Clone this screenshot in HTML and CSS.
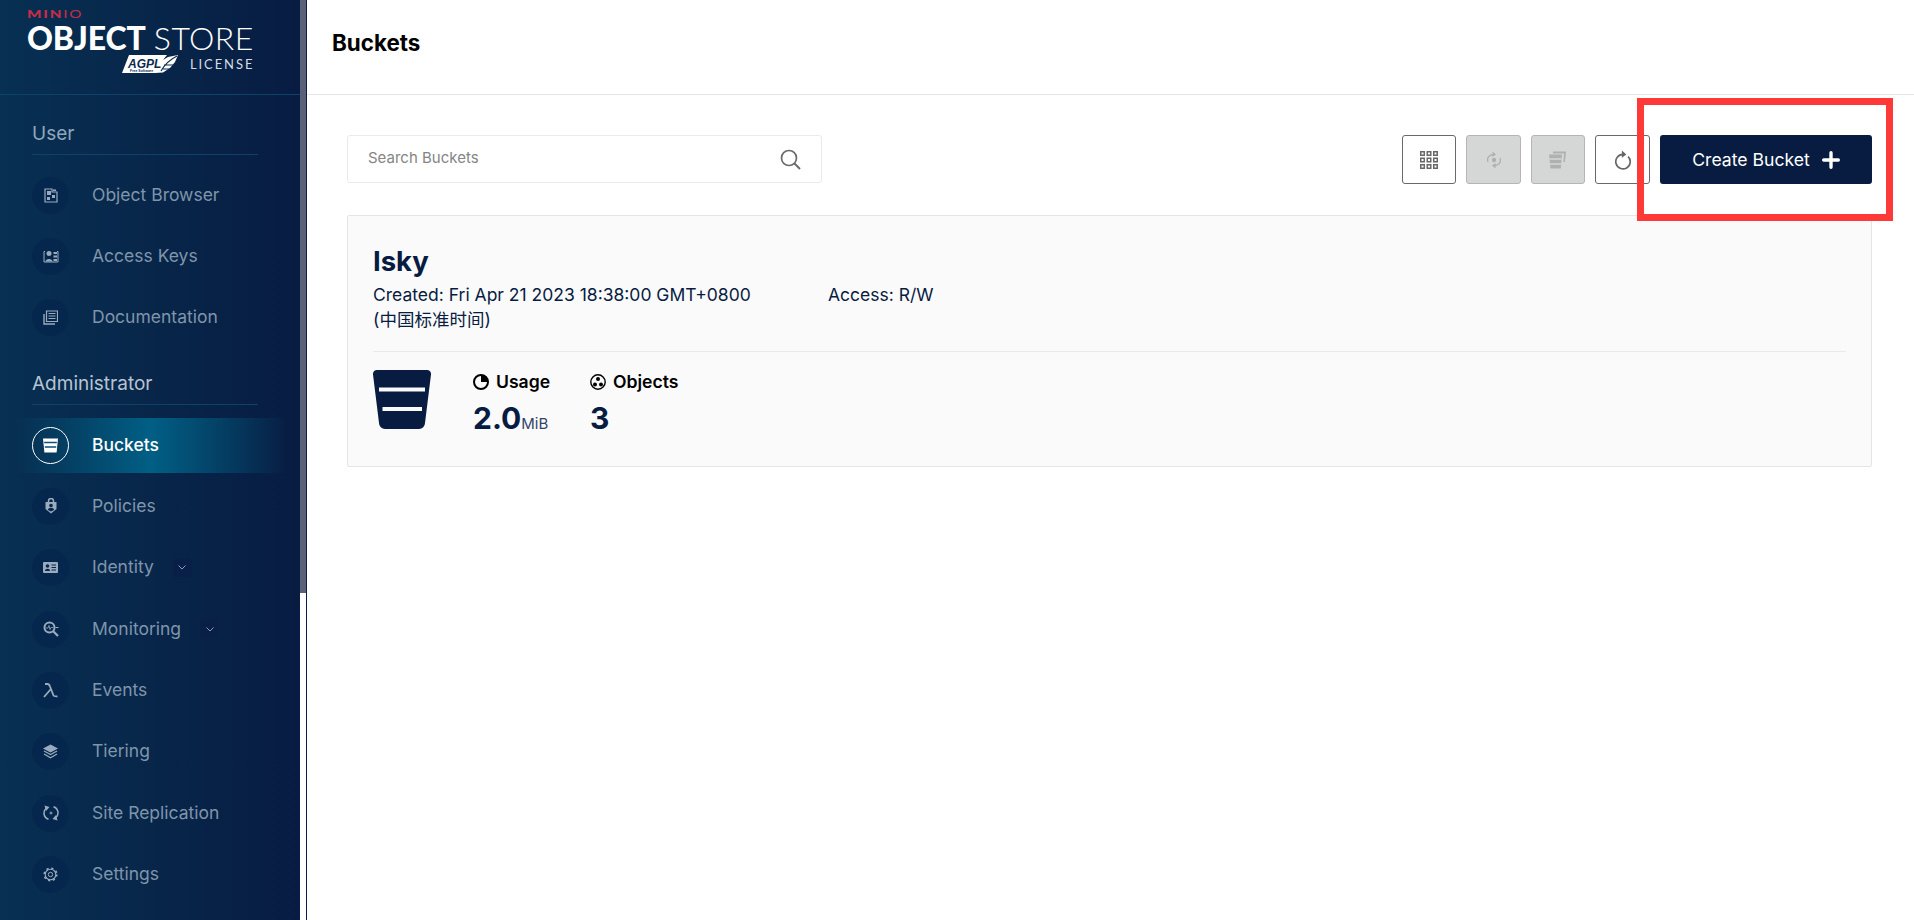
FILE: index.html
```html
<!DOCTYPE html>
<html lang="en">
<head>
<meta charset="utf-8">
<title>Buckets</title>
<link rel="stylesheet" href="styles.css">
</head>
<body>
<div class="app">
  <aside class="sidebar">
    <div class="logo">
      <div class="logo-minio"><span class="minio-bold">MIN</span><span class="minio-light">IO</span></div>
      <div class="logo-product"><span class="logo-strong">OBJECT</span> <span class="logo-thin">STORE</span></div>
      <div class="logo-license">
        <svg class="agpl" width="58" height="20" viewBox="0 0 58 20"><path d="M8 1H46L42 6 47 3 57 1 54 8 49 14 42 18.500 34 19H1Z" fill="#fff"/><path d="M40 17C44 10 50 5 56 2M43 11H52M42 15H49" stroke="#0a2a50" fill="none" stroke-width="1.200"/><text x="7" y="13.500" class="agpl-text">AGPL</text><text x="9" y="18" class="agpl-small">Free Software</text></svg>
        <span class="license-text">LICENSE</span>
      </div>
    </div>

    <div class="group-title">User</div>
    <nav class="nav">
      <a class="nav-item"><span class="nav-icon"><svg width="14" height="15" viewBox="0 0 14 15"><path d="M1 1H8V4H13V14H1Z" fill="none" stroke="currentColor" stroke-width="1.200"/><path d="M3 3H7V7H3ZM8 7H11V10H8ZM3 9H6V12H3ZM9 1.500H12V3H9Z" fill="currentColor"/></svg></span><span>Object Browser</span></a>
      <a class="nav-item"><span class="nav-icon"><svg width="16" height="13" viewBox="0 0 16 13"><path d="M2 1.500H1V12H15V1.500H14" fill="none" stroke="currentColor" stroke-width="1"/><circle cx="6" cy="3.500" r="2.500" fill="currentColor"/><path d="M2.500 11.500C2.500 8 9.500 8 9.500 11.500Z" fill="currentColor"/><path d="M10.500 2H14V4H10.500ZM10.500 5.500H14V7.500H10.500ZM10.500 9H14V11H10.500Z" fill="currentColor"/></svg></span><span>Access Keys</span></a>
      <a class="nav-item"><span class="nav-icon"><svg width="15" height="15" viewBox="0 0 15 15"><path d="M3.500 1H14.500V11.500H3.500Z" fill="none" stroke="currentColor" stroke-width="1.200"/><path d="M5.500 3.500H12.500M5.500 6H12.500M5.500 8.500H12.500" stroke="currentColor" stroke-width="1.200"/><path d="M1 4V14H12" fill="none" stroke="currentColor" stroke-width="1.400"/></svg></span><span>Documentation</span></a>
    </nav>

    <div class="group-title group-title-admin">Administrator</div>
    <nav class="nav">
      <a class="nav-item nav-item-active"><span class="nav-icon"><svg width="15" height="15" viewBox="0 0 15 15"><path d="M0 0.500H15L13.600 14.500H1.400Z" fill="currentColor"/><path d="M1.200 4.500H13.800M1.800 9H13.200" stroke="#08507a" stroke-width="1.500"/></svg></span><span>Buckets</span></a>
      <a class="nav-item"><span class="nav-icon"><svg width="12" height="16" viewBox="0 0 12 16"><path d="M3.500 4V3A2.500 2.500 0 0 1 8.500 3V4" fill="none" stroke="currentColor" stroke-width="1.500"/><path d="M0.500 4H11.500V11L6 15.500 0.500 11Z" fill="currentColor"/><circle cx="6" cy="7.500" r="1.800" fill="#06274d"/><path d="M3 12C3 9 9 9 9 12L6 13.500Z" fill="#06274d"/></svg></span><span>Policies</span></a>
      <a class="nav-item"><span class="nav-icon"><svg width="15" height="11" viewBox="0 0 15 11"><path d="M1 0H14A1 1 0 0 1 15 1V10A1 1 0 0 1 14 11H1A1 1 0 0 1 0 10V1A1 1 0 0 1 1 0Z" fill="currentColor"/><circle cx="4.500" cy="4" r="1.800" fill="#06274d"/><path d="M2 9C2 6 7 6 7 9Z" fill="#06274d"/><path d="M8.500 3H13M8.500 5.500H13M8.500 8H13" stroke="#06274d"/></svg></span><span>Identity</span><span class="chevron"><svg width="8" height="5" viewBox="0 0 8 5"><path d="M0.500 0.500L4 4 7.500 0.500" fill="none" stroke="currentColor"/></svg></span></a>
      <a class="nav-item"><span class="nav-icon"><svg width="16" height="16" viewBox="0 0 16 16"><circle cx="6.500" cy="6.500" r="5" fill="none" stroke="currentColor" stroke-width="2"/><path d="M10.500 10.500L15 15" stroke="currentColor" stroke-width="2.200"/><path d="M3 7H5L6 4.500 7 8.500 8 6.500H10" fill="none" stroke="currentColor" stroke-width=".8"/><path d="M12.500 6.500H15.500" stroke="currentColor"/></svg></span><span>Monitoring</span><span class="chevron"><svg width="8" height="5" viewBox="0 0 8 5"><path d="M0.500 0.500L4 4 7.500 0.500" fill="none" stroke="currentColor"/></svg></span></a>
      <a class="nav-item"><span class="nav-icon"><svg width="15" height="15" viewBox="0 0 15 15"><path d="M2 1H4.500C6 1 6.500 2 7 3.500L10.500 12.500C10.900 13.500 11.500 13.500 14.500 13.300M7.500 6.500L1 14" fill="none" stroke="currentColor" stroke-width="1.800"/></svg></span><span>Events</span></a>
      <a class="nav-item"><span class="nav-icon"><svg width="15" height="15" viewBox="0 0 15 15"><path d="M7.500 0.500L15 4.500 7.500 8.500 0 4.500Z" fill="currentColor"/><path d="M1 7L7.500 10.500 14 7M1 10L7.500 13.800 14 10" fill="none" stroke="currentColor" stroke-width="1.200"/></svg></span><span>Tiering</span></a>
      <a class="nav-item"><span class="nav-icon"><svg width="16" height="16" viewBox="0 0 16 16"><path d="M3.500 3A6.500 6.500 0 0 0 5.500 14.300M12.500 13A6.500 6.500 0 0 0 10.500 1.700" fill="none" stroke="currentColor" stroke-width="1.500"/><path d="M1.500 0.500L6.500 2 3 6ZM14.500 15.500L9.500 14 13 10Z" fill="currentColor"/><path d="M8 6.500V9.500M6.500 8H9.500" stroke="currentColor"/></svg></span><span>Site Replication</span></a>
      <a class="nav-item"><span class="nav-icon"><svg width="15" height="15" viewBox="0 0 15 15"><circle cx="7.500" cy="7.500" r="2.200" fill="none" stroke="currentColor"/><circle cx="7.500" cy="7.500" r="5.300" fill="none" stroke="currentColor" stroke-width="1.100"/><circle cx="7.500" cy="7.500" r="6.300" fill="none" stroke="currentColor" stroke-width="1.500" stroke-dasharray="2.200 2.750"/></svg></span><span>Settings</span></a>
    </nav>
  </aside>
  <div class="scroll-track"><div class="scroll-thumb"></div></div>

  <main class="main">
    <header class="page-header"><h1 class="page-title">Buckets</h1></header>
    <div class="content">
      <div class="toolbar">
        <div class="search">
          <span class="search-text">Search Buckets</span>
          <svg width="21" height="21" viewBox="0 0 21 21"><circle cx="9" cy="9" r="7.500" fill="none" stroke="#6b6b6b" stroke-width="1.700"/><path d="M14.500 14.500L20 20" stroke="#6b6b6b" stroke-width="2"/></svg>
        </div>
        <div class="actions">
          <button class="tool"><svg width="18" height="18" viewBox="0 0 18 18"><path d="M0 0h5v5H0zM6.500 0h5v5h-5zM13 0h5v5h-5zM0 6.500h5v5H0zM6.500 6.500h5v5h-5zM13 6.500h5v5h-5zM0 13h5v5H0zM6.500 13h5v5h-5zM13 13h5v5h-5z" fill="#696969"/><path d="M1.500 1.500h2v2h-2zM8 1.500h2v2H8zM14.500 1.500h2v2h-2zM1.500 8h2v2h-2zM8 8h2v2H8zM14.500 8h2v2h-2zM1.500 14.500h2v2h-2zM8 14.500h2v2H8zM14.500 14.500h2v2h-2z" fill="#fff"/></svg></button>
          <button class="tool tool-disabled tool-wide"><svg width="14" height="18" viewBox="0 0 14 18"><circle cx="7" cy="9" r="2.200" fill="#b0b0b0"/><path d="M1 11C-.5 7 2 4 6 3.500M13 7C14.500 11 12 14 8 14.500" fill="none" stroke="#b0b0b0" stroke-width="1.300"/><path d="M5.500 0.500L9 3.500 5.500 6ZM8.500 17.500L5 14.500 8.500 12Z" fill="#b0b0b0"/></svg></button>
          <button class="tool tool-disabled"><svg width="18" height="18" viewBox="0 0 18 18"><path d="M4 0.500H17L16 11H14.500L15 2.500H4Z" fill="#b0b0b0"/><path d="M0 3.500H13L11.800 17.500H1.500Z" fill="#b0b0b0"/><path d="M.5 8H12.500M1 13H12" stroke="#d5d7d6" stroke-width="1.300"/></svg></button>
          <button class="tool tool-wide"><svg width="18" height="20" viewBox="0 0 16 18"><path d="M8 4A6.500 6.500 0 1 0 12.600 5.900" fill="none" stroke="#666" stroke-width="1.500"/><path d="M7 0.500L11 4 7 7Z" fill="#666"/></svg></button>
          <button class="create">Create Bucket<svg width="18" height="18" viewBox="0 0 16 16"><path d="M8 1.500V14.500M1.500 8H14.500" stroke="#fff" stroke-width="3" stroke-linecap="round"/></svg></button>
        </div>
      </div>

      <section class="card">
        <h2 class="bucket-name">Isky</h2>
        <div class="meta">
          <div class="meta-created">Created: Fri Apr 21 2023 18:38:00 GMT+0800 (中国标准时间)</div>
          <div class="meta-access">Access: R/W</div>
        </div>
        <div class="stats">
          <svg class="bucket-icon" width="58" height="59" viewBox="0 0 58 59"><path d="M4 0H54A4 4 0 0 1 58 4.500L52 53A6 6 0 0 1 46 59H12A6 6 0 0 1 6 53L0 4.500A4 4 0 0 1 4 0Z" fill="#081c42"/><path d="M6 19.500H52M9.500 39H49" stroke="#fafafa" stroke-width="4"/></svg>
          <div class="stat stat-usage">
            <div class="stat-label"><svg width="16" height="16" viewBox="0 0 16 16"><circle cx="8" cy="8" r="7" fill="none" stroke="#000" stroke-width="2"/><path d="M8 8V1A7 7 0 0 1 15 8Z" fill="#000"/></svg>Usage</div>
            <div class="stat-value">2.0<span class="stat-unit">MiB</span></div>
          </div>
          <div class="stat">
            <div class="stat-label"><svg width="16" height="16" viewBox="0 0 16 16"><circle cx="8" cy="8" r="7.200" fill="none" stroke="#000" stroke-width="1.400"/><circle cx="8" cy="5" r="2" fill="#000"/><circle cx="5" cy="10.500" r="2" fill="#000"/><circle cx="11" cy="10.500" r="2" fill="#000"/></svg>Objects</div>
            <div class="stat-value">3</div>
          </div>
        </div>
      </section>
    </div>
  </main>
</div>
<div class="highlight"></div>
</body>
</html>
```

FILE: styles.css
```css
* { box-sizing: border-box; }
html, body { margin: 0; height: 100%; overflow: hidden; }
body { font-family: Inter, "Noto Sans CJK SC", sans-serif; background: #fff; color: #081c42; }

.app { display: flex; height: 920px; }

/* Sidebar */
.sidebar {
  width: 300px;
  flex: none;
  overflow: hidden;
  background: linear-gradient(90deg, #073052 0%, #081c42 100%);
  padding-bottom: 20px;
}
.scroll-track { width: 7px; flex: none; background: #fff; border-right: 1px solid #0a1f44; }
.scroll-thumb { height: 593px; background: #5b6079; }

.logo { height: 95px; border-bottom: 1px solid #0f4268; padding: 9px 0 0 27px; color: #fff; }
.logo-minio { font-family: Lato, sans-serif; font-size: 11px; line-height: 9px; letter-spacing: 1.3px; color: #c72c48; height: 9px; transform: scaleX(1.38); transform-origin: left; }
.minio-bold { font-weight: 900; }
.minio-light { font-weight: 400; }
.logo-product { margin-top: 7px; font-family: Lato, sans-serif; font-size: 32px; line-height: 26px; white-space: nowrap; }
.logo-strong { font-weight: 900; letter-spacing: -.1px; }
.logo-thin { font-weight: 300; letter-spacing: .45px; }
.logo-license { display: flex; align-items: center; margin: 3px 0 0 94px; height: 20px; gap: 11px; }
.agpl { flex: none; }
.agpl-text { font: italic 700 12px "Liberation Sans", sans-serif; fill: #0a2a50; }
.agpl-small { font: 700 3.500px "Liberation Sans", sans-serif; fill: #0a2a50; }
.license-text { font-family: Lato, sans-serif; font-size: 13px; letter-spacing: 1.9px; color: #d6dce4; }

.group-title {
  display: flex;
  align-items: flex-end;
  height: 60px;
  margin: 0 42px 0 32px;
  padding-bottom: 9px;
  border-bottom: 1px solid #0f4268;
  font-size: 19px;
  line-height: 22px;
  color: #8fa7be;
}
.group-title-admin { color: #b7c4d2; }

.nav { display: flex; flex-direction: column; gap: 6.33px; margin-top: 12.5px; }
.nav-item { display: flex; align-items: center; height: 55px; padding-left: 32px; font-size: 17.5px; color: #7f95ab; }
.nav-item > span { padding-bottom: 2px; }
.nav-icon {
  display: flex;
  align-items: center;
  justify-content: center;
  flex: none;
  width: 37px;
  height: 37px;
  margin-right: 23px;
  border-radius: 50%;
  background: #06274d;
  color: #9aabbd;
}
.nav-item > .nav-icon, .nav-item > .chevron { padding-bottom: 0; }
.nav-item-active {
  color: #fff;
  font-weight: 500;
  background: linear-gradient(90deg, transparent 5%, #015f85 50%, transparent 96%);
}
.nav-item-active .nav-icon { background: transparent; border: 1px solid #fff; color: #fff; }
.chevron {
  display: flex;
  align-items: center;
  justify-content: center;
  width: 19px;
  height: 18px;
  margin-left: 19px;
  border-radius: 3px;
  background: #0a1f47;
  color: #8b9db1;
}

/* Main */
.main { flex: 1; min-width: 0; }
.page-header { display: flex; align-items: center; height: 95px; padding-left: 25px; padding-bottom: 9px; border-bottom: 1px solid #e5e5e5; }
.page-title { margin: 0; font-size: 22.4px; font-weight: 700; color: #000; }
.content { padding: 40px 42px 0 40px; }

.toolbar { display: flex; justify-content: space-between; align-items: flex-start; }
.search {
  display: flex;
  align-items: center;
  justify-content: space-between;
  width: 475px;
  height: 48px;
  padding: 0 20px;
  border: 1px solid #eaeaea;
  border-radius: 3px;
}
.search-text { font-size: 15px; color: #858585; margin-top: -3px; }

.actions { display: flex; gap: 10px; }
.tool {
  display: flex;
  align-items: center;
  justify-content: center;
  width: 54px;
  height: 49px;
  padding: 0;
  border: 1px solid #696969;
  border-radius: 3px;
  background: #fff;
}
.tool-disabled { border-color: #b5b5b5; background: #d5d7d6; }
.tool-wide { width: 55px; }
.create {
  display: flex;
  align-items: center;
  justify-content: center;
  gap: 12px;
  width: 212px;
  height: 49px;
  padding: 0;
  border: 0;
  border-radius: 3px;
  background: #081c42;
  color: #fff;
  font: 400 17.6px Inter, sans-serif;
}

.card {
  height: 252px;
  margin-top: 31px;
  padding: 26px 25px 0 25px;
  border: 1px solid #e5e5e5;
  border-radius: 2px;
  background: #fafafa;
}
.bucket-name { margin: 0; font-size: 27.5px; line-height: 38px; font-weight: 700; }
.meta { display: flex; font-size: 17.5px; line-height: 24.5px; height: 69px; border-bottom: 1px solid #eaeaea; margin-top: 3px; }
.meta-created { width: 455px; padding-right: 56px; }

.stats { display: flex; padding-top: 18px; }
.bucket-icon { flex: none; margin-right: 42px; }
.stat { display: flex; flex-direction: column; }
.stat-usage { width: 117px; }
.stat-label { display: flex; align-items: center; gap: 7px; font-size: 17.6px; font-weight: 600; line-height: 24px; color: #000; }
.stat-value { font-size: 30px; font-weight: 700; line-height: 44px; margin-top: 2px; }
.stat-unit { font-size: 15px; font-weight: 400; color: #33446a; }

/* Red annotation drawn over the screenshot */
.highlight { position: absolute; left: 1637px; top: 98px; width: 256px; height: 123px; border: 7px solid #ff3838; }
```
